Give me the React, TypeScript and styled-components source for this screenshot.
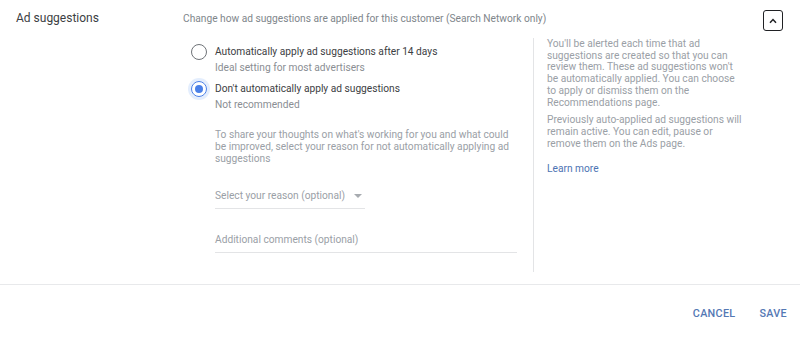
import React, { useState } from "react";
import styled, { createGlobalStyle } from "styled-components";

const GlobalStyle = createGlobalStyle`
  html, body {
    margin: 0;
    padding: 0;
    background: #ffffff;
  }
  body {
    font-family: Roboto, "Liberation Sans", Arial, sans-serif;
    -webkit-font-smoothing: antialiased;
  }
`;

const Page = styled.div`
  width: 800px;
  height: 337px;
  background: #ffffff;
  display: flex;
  flex-direction: column;
`;

const Section = styled.div`
  display: flex;
  align-items: flex-start;
`;

const SectionLabel = styled.div`
  flex: none;
  width: 167px;
  padding: 10px 0 0 16px;
  font-size: 12px;
  line-height: 16px;
  color: #3c4043;
`;

const Main = styled.div`
  flex: 1;
  min-width: 0;
  display: flex;
  flex-direction: column;
`;

const Description = styled.div`
  margin: 11px 0 11px;
  font-size: 10.2px;
  line-height: 16px;
  color: #80868b;
`;

const Body = styled.div`
  display: flex;
`;

const Options = styled.div`
  flex: none;
  width: 342px;
  padding: 6px 0 19px 8px;
  display: flex;
  flex-direction: column;
`;

const RadioRow = styled.label<{ $first?: boolean }>`
  display: flex;
  align-items: flex-start;
  gap: 8px;
  margin-top: ${(p) => (p.$first ? "0" : "6px")};
  cursor: pointer;
`;

const RadioCircle = styled.span<{ $checked: boolean }>`
  flex: none;
  box-sizing: border-box;
  width: 16px;
  height: 16px;
  border-radius: 50%;
  border: 1.5px solid ${(p) => (p.$checked ? "#4a80e8" : "#6f7378")};
  display: flex;
  align-items: center;
  justify-content: center;
  box-shadow: ${(p) =>
    p.$checked ? "0 0 0 3px rgba(66, 133, 244, 0.14)" : "none"};

  &::after {
    content: "";
    width: 8px;
    height: 8px;
    border-radius: 50%;
    background: ${(p) => (p.$checked ? "#4a80e8" : "transparent")};
  }
`;

const RadioText = styled.div`
  display: flex;
  flex-direction: column;
`;

const RadioTitle = styled.span`
  font-size: 10.2px;
  line-height: 16px;
  color: #3c4043;
`;

const RadioHint = styled.span`
  font-size: 10.2px;
  line-height: 15px;
  color: #8a8e93;
`;

const Reason = styled.div`
  margin: 17px 0 0 24px;
  width: 305px;
  font-size: 10.2px;
  line-height: 11.8px;
  color: #9aa0a6;
`;

const Field = styled.div<{ $width: number; $gap: number }>`
  margin: ${(p) => p.$gap}px 0 0 24px;
  width: ${(p) => p.$width}px;
  padding-bottom: 4px;
  border-bottom: 1px solid #e3e4e6;
  display: flex;
  align-items: center;
  gap: 9px;
  font-size: 10.2px;
  line-height: 16px;
  color: #9aa0a6;
  white-space: nowrap;
`;

const Caret = styled.span`
  width: 0;
  height: 0;
  border-left: 4px solid transparent;
  border-right: 4px solid transparent;
  border-top: 4px solid #a7abb0;
`;

const Help = styled.div`
  flex: none;
  width: 195px;
  align-self: stretch;
  border-left: 1px solid #e3e4e6;
  padding: 0 0 0 13px;
  display: flex;
  flex-direction: column;
`;

const HelpText = styled.p<{ $gap?: number }>`
  margin: ${(p) => p.$gap ?? 0}px 0 0;
  font-size: 10.2px;
  line-height: 11.7px;
  color: #9aa0a6;
`;

const LearnMore = styled.a`
  align-self: flex-start;
  margin-top: 12px;
  font-size: 10.2px;
  line-height: 16px;
  color: #4d73b3;
  text-decoration: none;
`;

const ToggleColumn = styled.div`
  flex: none;
  box-sizing: border-box;
  width: 50px;
  display: flex;
  justify-content: flex-end;
  padding: 10px 17px 0 0;
`;

const ToggleButton = styled.button`
  box-sizing: border-box;
  width: 20px;
  height: 21px;
  padding: 0;
  border: 1.6px solid #202124;
  border-radius: 3px;
  background: #ffffff;
  display: flex;
  align-items: center;
  justify-content: center;
  cursor: pointer;
`;

const Footer = styled.div`
  margin-top: 12px;
  border-top: 1px solid #e8e9eb;
  display: flex;
  justify-content: flex-end;
  gap: 24px;
  padding: 21px 13px 0 0;
`;

const FooterButton = styled.button`
  border: none;
  background: none;
  padding: 0;
  font-family: Roboto, "Liberation Sans", Arial, sans-serif;
  font-size: 10.8px;
  font-weight: 500;
  letter-spacing: 0.3px;
  line-height: 16px;
  color: #5478b4;
  cursor: pointer;
`;

const options = [
  {
    id: "auto",
    title: "Automatically apply ad suggestions after 14 days",
    hint: "Ideal setting for most advertisers",
  },
  {
    id: "manual",
    title: "Don't automatically apply ad suggestions",
    hint: "Not recommended",
  },
];

export default function App() {
  const [choice, setChoice] = useState("manual");

  return (
    <Page>
      <GlobalStyle />
      <Section>
        <SectionLabel>Ad suggestions</SectionLabel>
        <Main>
          <Description>
            Change how ad suggestions are applied for this customer (Search
            Network only)
          </Description>
          <Body>
            <Options>
              {options.map((o, i) => (
                <RadioRow
                  key={o.id}
                  $first={i === 0}
                  onClick={() => setChoice(o.id)}
                >
                  <RadioCircle $checked={choice === o.id} />
                  <RadioText>
                    <RadioTitle>{o.title}</RadioTitle>
                    <RadioHint>{o.hint}</RadioHint>
                  </RadioText>
                </RadioRow>
              ))}
              <Reason>
                To share your thoughts on what's working for you and what could
                be improved, select your reason for not automatically applying
                ad suggestions
              </Reason>
              <Field $width={150} $gap={24}>
                Select your reason (optional)
                <Caret />
              </Field>
              <Field $width={302} $gap={23}>
                Additional comments (optional)
              </Field>
            </Options>
            <Help>
              <HelpText>
                You'll be alerted each time that ad suggestions are created so
                that you can review them. These ad suggestions won't be
                automatically applied. You can choose to apply or dismiss them
                on the Recommendations page.
              </HelpText>
              <HelpText $gap={6}>
                Previously auto-applied ad suggestions will remain active. You
                can edit, pause or remove them on the Ads page.
              </HelpText>
              <LearnMore href="#">Learn more</LearnMore>
            </Help>
          </Body>
        </Main>
        <ToggleColumn>
          <ToggleButton aria-label="Collapse">
            <svg width="10" height="10" viewBox="0 0 10 10">
              <path
                d="M2 6.8 L5 3.6 L8 6.8"
                fill="none"
                stroke="#202124"
                strokeWidth="1.5"
              />
            </svg>
          </ToggleButton>
        </ToggleColumn>
      </Section>
      <Footer>
        <FooterButton>CANCEL</FooterButton>
        <FooterButton>SAVE</FooterButton>
      </Footer>
    </Page>
  );
}
